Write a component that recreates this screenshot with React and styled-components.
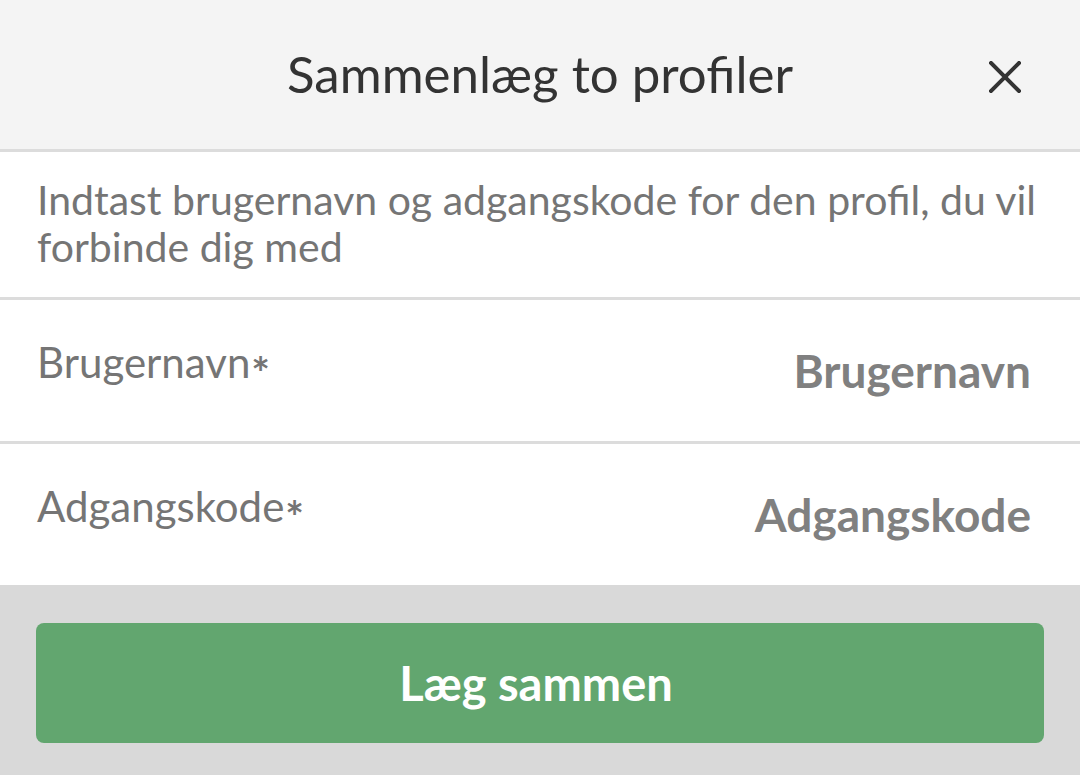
import React from 'react';
import styled, { createGlobalStyle } from 'styled-components';

const GlobalStyle = createGlobalStyle`
  html, body {
    margin: 0;
    padding: 0;
    background: #ffffff;
  }
  body {
    font-family: Lato, "Open Sans", sans-serif;
  }
  * {
    box-sizing: border-box;
  }
`;

const Sheet = styled.div`
  width: 1080px;
  height: 775px;
  display: flex;
  flex-direction: column;
  overflow: hidden;
`;

const Header = styled.header`
  height: 152px;
  flex-shrink: 0;
  display: flex;
  align-items: center;
  justify-content: center;
  position: relative;
  background: #f4f4f4;
  border-bottom: 3px solid #dcdcdc;
`;

const Title = styled.h1`
  margin: 0 0 2px;
  font-size: 51px;
  font-weight: 400;
  color: #333333;
`;

const CloseButton = styled.button`
  position: absolute;
  right: 56px;
  top: 58px;
  width: 38px;
  height: 38px;
  padding: 0;
  border: none;
  background: none;
  display: flex;
  align-items: center;
  justify-content: center;
`;

const Intro = styled.p`
  margin: 0;
  height: 148px;
  flex-shrink: 0;
  padding: 24px 30px 0 37px;
  font-size: 41px;
  line-height: 47px;
  color: #757575;
  border-bottom: 3px solid #dcdcdc;
`;

const Field = styled.label`
  height: ${p => (p.last ? '141px' : '144px')};
  flex-shrink: 0;
  display: flex;
  align-items: center;
  justify-content: space-between;
  padding: 0 49px 0 37px;
  border-bottom: ${p => (p.last ? 'none' : '3px solid #dcdcdc')};
`;

const FieldLabel = styled.span`
  font-size: 42px;
  color: #757575;
  margin-top: -6px;
`;

const Required = styled.span`
  font-size: 44px;
  font-weight: 700;
  vertical-align: -0.26em;
  margin-left: 1px;
`;

const FieldInput = styled.input`
  border: none;
  outline: none;
  background: transparent;
  text-align: right;
  width: 560px;
  padding: 0;
  font-family: Lato, "Open Sans", sans-serif;
  font-size: 46px;
  font-weight: 700;
  color: #333;

  &::placeholder {
    color: #808080;
    opacity: 1;
  }
`;

const Footer = styled.footer`
  flex: 1;
  background: #d9d9d9;
  padding: 38px 36px 0;
`;

const SubmitButton = styled.button`
  width: 100%;
  height: 120px;
  padding: 0 8px 0 0;
  border: none;
  border-radius: 8px;
  background: #62a66f;
  color: #ffffff;
  font-family: Lato, "Open Sans", sans-serif;
  font-size: 47px;
  font-weight: 700;
`;

const CloseIcon = () => (
  <svg width="32" height="32" viewBox="0 0 32 32">
    <path d="M2 2 L30 30 M30 2 L2 30" stroke="#333333" strokeWidth="4" strokeLinecap="square" />
  </svg>
);

const fields = [
  { name: 'username', label: 'Brugernavn', placeholder: 'Brugernavn', type: 'text' },
  { name: 'password', label: 'Adgangskode', placeholder: 'Adgangskode', type: 'password' },
];

export default function App() {
  return (
    <>
      <GlobalStyle />
      <Sheet>
        <Header>
          <Title>Sammenlæg to profiler</Title>
          <CloseButton aria-label="Luk">
            <CloseIcon />
          </CloseButton>
        </Header>
        <Intro>Indtast brugernavn og adgangskode for den profil, du vil forbinde dig med</Intro>
        {fields.map((f, i) => (
          <Field key={f.name} last={i === fields.length - 1}>
            <FieldLabel>
              {f.label}
              <Required>*</Required>
            </FieldLabel>
            <FieldInput type={f.type} placeholder={f.placeholder} />
          </Field>
        ))}
        <Footer>
          <SubmitButton>Læg sammen</SubmitButton>
        </Footer>
      </Sheet>
    </>
  );
}
